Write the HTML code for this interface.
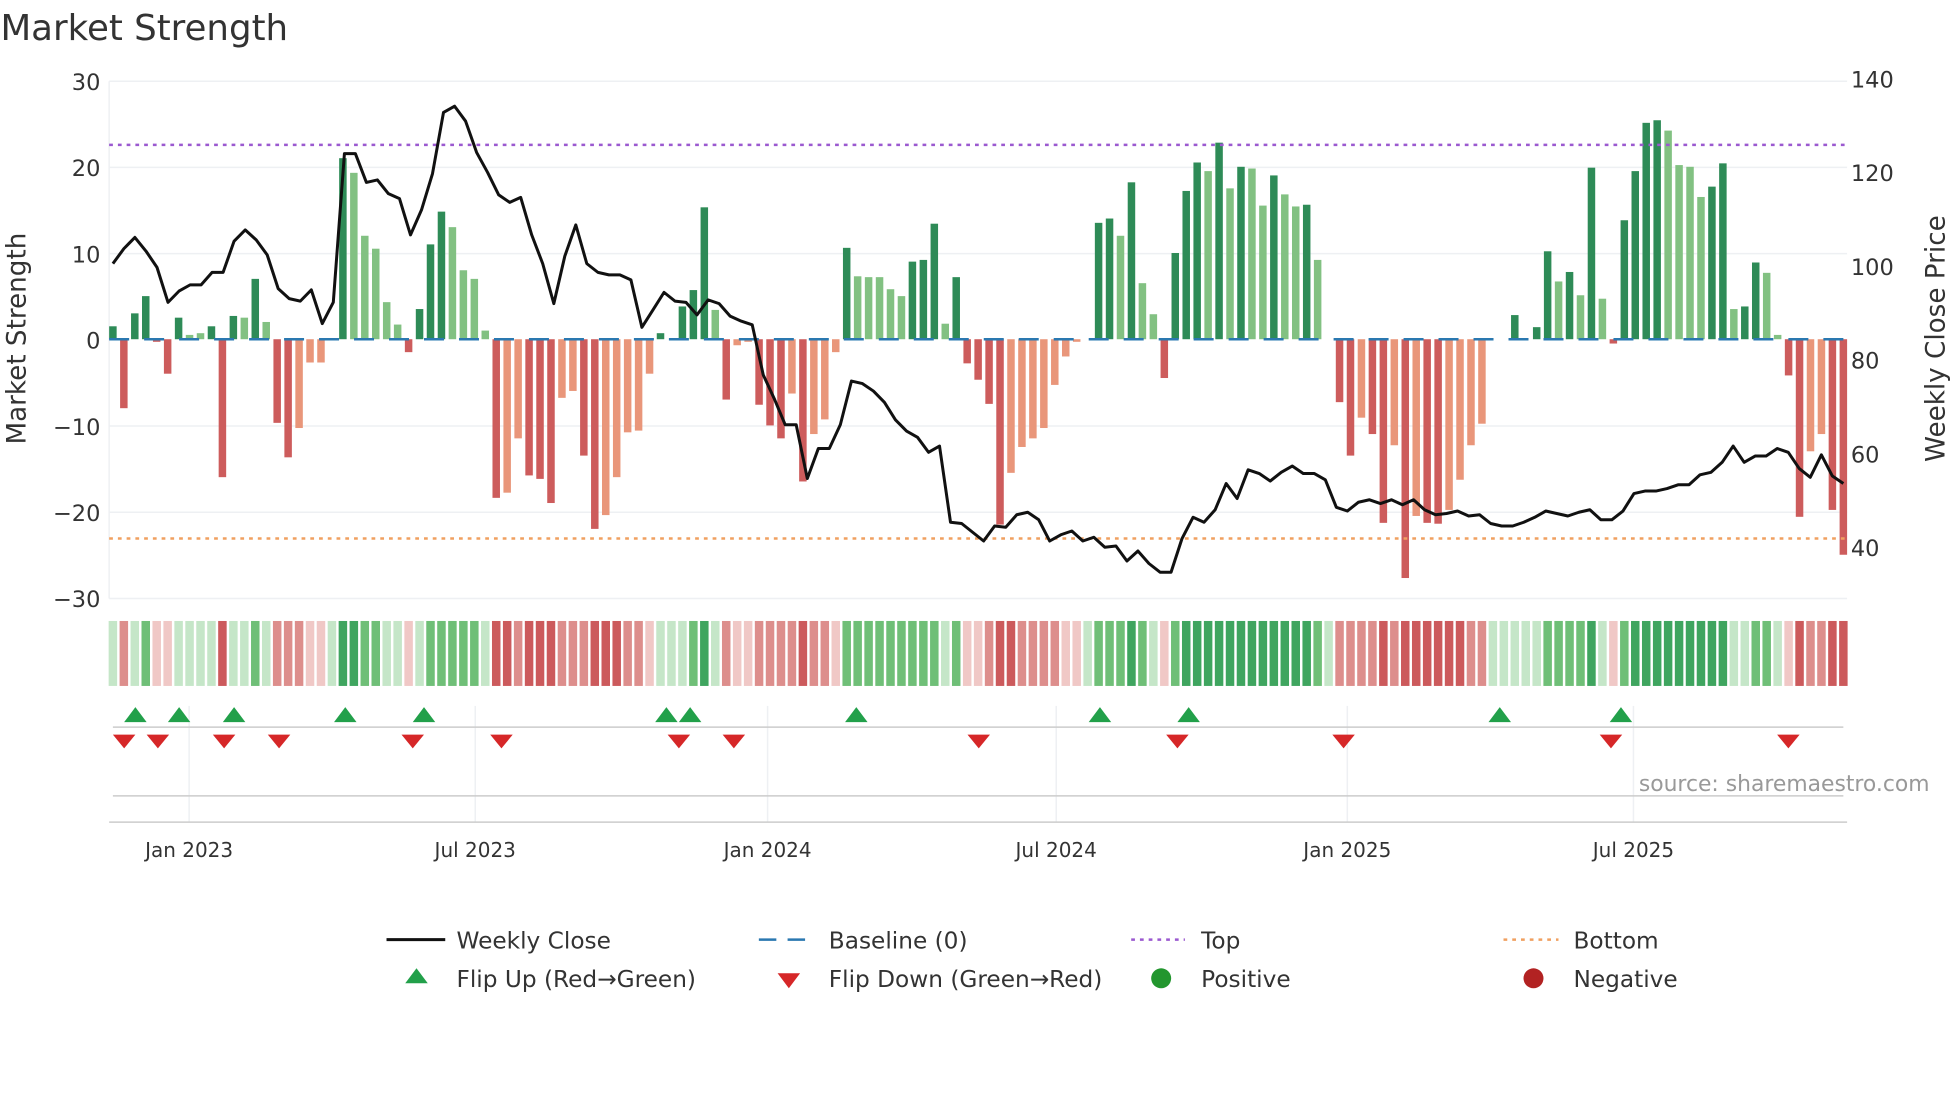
<!DOCTYPE html>
<html><head><meta charset="utf-8"><style>
html,body{margin:0;padding:0;background:#fff;width:1960px;height:1102px;overflow:hidden}
svg{display:block}
text{font-family:"DejaVu Sans","Liberation Sans",sans-serif}
</style></head><body>
<svg id="s" width="1960" height="1102" viewBox="0 0 1568 882" xmlns="http://www.w3.org/2000/svg">
<rect width="1568" height="882" fill="#fff"/>
<text x="0" y="32" font-size="28.5" fill="#333">Market Strength</text>
<g stroke="#eef0f3" stroke-width="1.2" id="grid">
<line x1="87" x2="1478" y1="65" y2="65"/><line x1="87" x2="1478" y1="134" y2="134"/><line x1="87" x2="1478" y1="203" y2="203"/><line x1="87" x2="1478" y1="341" y2="341"/><line x1="87" x2="1478" y1="410" y2="410"/><line x1="87" x2="1478" y1="479" y2="479"/>
<line x1="87" x2="87" y1="65" y2="479"/>
<line x1="151" x2="151" y1="565" y2="658"/><line x1="380" x2="380" y1="565" y2="658"/><line x1="614" x2="614" y1="565" y2="658"/><line x1="845" x2="845" y1="565" y2="658"/><line x1="1078" x2="1078" y1="565" y2="658"/><line x1="1307" x2="1307" y1="565" y2="658"/>
</g>
<g font-size="18" fill="#333" text-anchor="end">
<text x="80" y="72">30</text><text x="80" y="141">20</text><text x="80" y="210">10</text><text x="80" y="279">0</text><text x="80" y="348">−10</text><text x="80" y="417">−20</text><text x="80" y="486">−30</text>
</g>
<g font-size="18" fill="#333">
<text x="1481" y="70">140</text><text x="1481" y="145">120</text><text x="1481" y="220">100</text><text x="1481" y="295">80</text><text x="1481" y="370">60</text><text x="1481" y="445">40</text>
</g>
<text transform="translate(20,271) rotate(-90)" font-size="21" fill="#333" text-anchor="middle">Market Strength</text>
<text transform="translate(1556,271) rotate(-90)" font-size="21" fill="#333" text-anchor="middle">Weekly Close Price</text>
<g id="bars"></g>
<line x1="87" x2="1478" y1="271.5" y2="271.5" stroke="#2a78b0" stroke-width="2" stroke-dasharray="16 12"/>
<line x1="87" x2="1478" y1="116" y2="116" stroke="#9b59d0" stroke-width="2" stroke-dasharray="3 4"/>
<line x1="87" x2="1478" y1="431" y2="431" stroke="#f0a060" stroke-width="2" stroke-dasharray="3 4"/>
<polyline id="price" fill="none" stroke="#111" stroke-width="2.4" stroke-linejoin="round"/>
<g id="heat"></g>
<line x1="90" x2="1475" y1="582" y2="582" stroke="#ccc" stroke-width="1.2"/>
<line x1="90" x2="1475" y1="637" y2="637" stroke="#ccc" stroke-width="1.2"/>
<g id="marks"></g>
<line x1="87" x2="1478" y1="658" y2="658" stroke="#ccc" stroke-width="1.2"/>
<g font-size="16" fill="#333" text-anchor="middle">
<text x="151" y="686">Jan 2023</text><text x="380" y="686">Jul 2023</text><text x="614" y="686">Jan 2024</text><text x="845" y="686">Jul 2024</text><text x="1078" y="686">Jan 2025</text><text x="1307" y="686">Jul 2025</text>
</g>
<text x="1544" y="633" font-size="17.5" fill="#999" text-anchor="end">source: sharemaestro.com</text>
<g font-size="18.6" fill="#333">
<line x1="309" x2="356" y1="752" y2="752" stroke="#111" stroke-width="2.4"/><text x="365" y="759">Weekly Close</text>
<line x1="607" x2="652" y1="752" y2="752" stroke="#2a78b0" stroke-width="2" stroke-dasharray="14 9"/><text x="663" y="759">Baseline (0)</text>
<line x1="905" x2="948" y1="752" y2="752" stroke="#9b59d0" stroke-width="2" stroke-dasharray="3 4"/><text x="961" y="759">Top</text>
<line x1="1203" x2="1247" y1="752" y2="752" stroke="#f0a060" stroke-width="2" stroke-dasharray="3 4"/><text x="1259" y="759">Bottom</text>
<path d="M333 775 L342 787 L324 787 Z" fill="#22a04a"/><text x="365" y="790">Flip Up (Red→Green)</text>
<path d="M622 779 L640 779 L631 791 Z" fill="#d62728"/><text x="663" y="790">Flip Down (Green→Red)</text>
<circle cx="929" cy="783" r="8" fill="#22962e"/><text x="961" y="790">Positive</text>
<circle cx="1227" cy="783" r="8" fill="#b22222"/><text x="1259" y="790">Negative</text>
</g>
</svg>
<script>
var V=[[1.5,'g'],[-8,'r'],[3,'g'],[5,'g'],[-0.3,'r'],[-4,'r'],[2.5,'g'],[0.5,'l'],[0.7,'l'],[1.5,'g'],[-16,'r'],[2.7,'g'],[2.5,'l'],[7,'g'],[2,'l'],[-9.7,'r'],[-13.7,'r'],[-10.3,'s'],[-2.7,'s'],[-2.7,'s'],[0,'g'],[21,'g'],[19.3,'l'],[12,'l'],[10.5,'l'],[4.3,'l'],[1.7,'l'],[-1.5,'r'],[3.5,'g'],[11,'g'],[14.8,'g'],[13,'l'],[8,'l'],[7,'l'],[1,'l'],[-18.4,'r'],[-17.8,'s'],[-11.5,'s'],[-15.8,'r'],[-16.2,'r'],[-19,'r'],[-6.8,'s'],[-6,'s'],[-13.5,'r'],[-22,'r'],[-20.4,'s'],[-16,'s'],[-10.8,'s'],[-10.6,'s'],[-4,'s'],[0.7,'g'],[0,'g'],[3.8,'g'],[5.7,'g'],[15.3,'g'],[3.4,'l'],[-7,'r'],[-0.7,'s'],[-0.3,'s'],[-7.6,'r'],[-10,'r'],[-11.5,'r'],[-6.3,'s'],[-16.5,'r'],[-11,'s'],[-9.3,'s'],[-1.5,'s'],[10.6,'g'],[7.3,'l'],[7.2,'l'],[7.2,'l'],[5.8,'l'],[5,'l'],[9,'g'],[9.2,'g'],[13.4,'g'],[1.8,'l'],[7.2,'g'],[-2.8,'r'],[-4.7,'r'],[-7.5,'r'],[-21.5,'r'],[-15.5,'s'],[-12.5,'s'],[-11.5,'s'],[-10.3,'s'],[-5.3,'s'],[-2,'s'],[-0.3,'s'],[0,'g'],[13.5,'g'],[14,'g'],[12,'l'],[18.2,'g'],[6.5,'l'],[2.9,'l'],[-4.5,'r'],[10,'g'],[17.2,'g'],[20.5,'g'],[19.5,'l'],[22.8,'g'],[17.5,'l'],[20,'g'],[19.8,'l'],[15.5,'l'],[19,'g'],[16.8,'l'],[15.4,'l'],[15.6,'g'],[9.2,'l'],[0,'g'],[-7.3,'r'],[-13.5,'r'],[-9.1,'s'],[-11,'r'],[-21.3,'r'],[-12.3,'s'],[-27.7,'r'],[-20.5,'s'],[-21.3,'r'],[-21.4,'r'],[-19.8,'s'],[-16.3,'s'],[-12.3,'s'],[-9.8,'s'],[0,'g'],[0,'g'],[2.8,'g'],[0,'g'],[1.4,'g'],[10.2,'g'],[6.7,'l'],[7.8,'g'],[5.1,'l'],[19.9,'g'],[4.7,'l'],[-0.5,'r'],[13.8,'g'],[19.5,'g'],[25.1,'g'],[25.4,'g'],[24.2,'l'],[20.2,'l'],[20,'l'],[16.5,'l'],[17.7,'g'],[20.4,'g'],[3.5,'l'],[3.8,'g'],[8.9,'g'],[7.7,'l'],[0.5,'l'],[-4.2,'r'],[-20.6,'r'],[-13,'s'],[-11,'s'],[-19.8,'r'],[-25,'r']];
var C={g:'#2e8b57',l:'#82c182',r:'#cd5c5c',s:'#e9967a'};
var n=V.length,step=(1475-90)/(n-1),b='',h='';
for(var i=0;i<n;i++){var x=90+i*step,v=V[i][0],y0=271.5,y1=y0-v*6.9;
if(Math.abs(v)>0.05)b+='<rect x="'+(x-3)+'" y="'+Math.min(y0,y1)+'" width="6" height="'+Math.abs(y1-y0)+'" fill="'+C[V[i][1]]+'"/>';
var c;if(v>=15)c='#3fa55f';else if(v>=5)c='#6fbf77';else if(v>=0)c='#c5e6c8';else if(v<=-15)c='#cc5a5c';else if(v<=-5)c='#dd8e8c';else c='#f0c8c6';
h+='<rect x="'+(x-3.4)+'" y="497" width="6.8" height="52" fill="'+c+'"/>';}
document.getElementById('bars').innerHTML=b;document.getElementById('heat').innerHTML=h;
var P=[211,199,190,201,214,242,233,228,228,218,218,193,184,192,204,231,239,241,232,259,242,123,123,146,144,155,159,188,168,139,90,85,97,122,138,156,162,158,188,211,243,205,180,211,218,220,220,224,262,248,234,241,242,252,240,243,253,257,260,300,319,340,340,383,359,359,340,305,307,313,322,336,345,350,362,357,418,419,426,433,421,422,412,410,416,433,428,425,433,430,438,437,449,441,451,458,458,431,414,418,408,387,399,376,379,385,378,373,379,379,384,406,409,402,400,403,400,404,400,408,412,411,409,413,412,419,421,421,418,414,409,411,413,410,408,416,416,409,395,393,393,391,388,388,380,378,370,357,370,365,365,359,362,375,382,364,381,387];
var pts=[];for(var i=0;i<P.length;i++)pts.push((90+i*(1475-90)/(P.length-1)).toFixed(1)+','+P[i]);
document.getElementById('price').setAttribute('points',pts.join(' '));
var U=[108,143,187,276,339,533,552,685,880,951,1200,1297],D=[99,126,179,223,330,401,543,587,783,942,1075,1289,1431],m='';
U.forEach(function(x){m+='<path d="M'+x+' 566 L'+(x+9)+' 578 L'+(x-9)+' 578 Z" fill="#22a04a"/>'});
D.forEach(function(x){m+='<path d="M'+(x-9)+' 588 L'+(x+9)+' 588 L'+x+' 599 Z" fill="#d62728"/>'});
document.getElementById('marks').innerHTML=m;
</script>
</body></html>
